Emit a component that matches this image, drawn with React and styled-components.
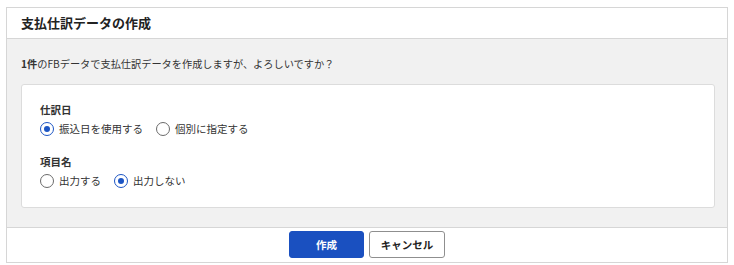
import React, { useState } from "react";
import styled, { createGlobalStyle } from "styled-components";

const GlobalStyle = createGlobalStyle`
  body {
    margin: 0;
    background: #fff;
    font-family: "Noto Sans CJK JP", "Noto Sans", sans-serif;
    color: #333;
  }
`;

const Page = styled.div`
  padding: 7px 6px 0 6px;
`;

const Dialog = styled.div`
  width: 722px;
  height: 256px;
  box-sizing: border-box;
  border: 1px solid #d6d6d6;
  display: flex;
  flex-direction: column;
  background: #fff;
`;

const Header = styled.div`
  height: 32px;
  box-sizing: border-box;
  border-bottom: 1px solid #d6d6d6;
  display: flex;
  align-items: center;
  padding: 0 14px;
`;

const Title = styled.h1`
  margin: 0;
  font-size: 13px;
  font-weight: 700;
  color: #222;
  line-height: 1;
`;

const Body = styled.div`
  flex: 1;
  background: #f1f1f1;
  border-bottom: 1px solid #d6d6d6;
  padding: 17px 12px 19px 14px;
  display: flex;
  flex-direction: column;
`;

const Message = styled.p`
  margin: 0 0 13px 0;
  font-size: 10.2px;
  line-height: 15px;
  color: #333;

  strong {
    font-weight: 700;
  }
`;

const Card = styled.div`
  background: #fff;
  border: 1px solid #dcdcdc;
  border-radius: 3px;
  padding: 18px 18px 19px 18px;
  display: flex;
  flex-direction: column;
  gap: 19px;
`;

const Field = styled.div`
  display: flex;
  flex-direction: column;
  gap: 5px;
`;

const Label = styled.div`
  font-size: 10.5px;
  line-height: 14px;
  font-weight: 700;
  color: #333;
`;

const Options = styled.div`
  display: flex;
  align-items: center;
  gap: 13px;
`;

const Option = styled.label`
  display: flex;
  align-items: center;
  gap: 5px;
  font-size: 10.5px;
  line-height: 14px;
  color: #333;
  cursor: pointer;
`;

const Circle = styled.span`
  width: 14px;
  height: 14px;
  box-sizing: border-box;
  border-radius: 50%;
  border: 1.5px solid ${(p) => (p.$checked ? "#1c55c4" : "#6b6b6b")};
  display: flex;
  align-items: center;
  justify-content: center;
  background: #fff;

  &::after {
    content: "";
    width: 6px;
    height: 6px;
    border-radius: 50%;
    background: #1c55c4;
    display: ${(p) => (p.$checked ? "block" : "none")};
  }
`;

const Footer = styled.div`
  height: 36px;
  display: flex;
  align-items: center;
  justify-content: center;
  gap: 5px;
`;

const Button = styled.button`
  height: 27px;
  width: ${(p) => p.$width}px;
  box-sizing: border-box;
  border-radius: 3px;
  font-family: inherit;
  font-size: 10.5px;
  font-weight: 700;
  cursor: pointer;
  padding: 0;
  background: ${(p) => (p.$primary ? "#1a50c0" : "#fff")};
  color: ${(p) => (p.$primary ? "#fff" : "#222")};
  border: 1px solid ${(p) => (p.$primary ? "#1a50c0" : "#8f8f8f")};
`;

const Radio = ({ checked, onClick, children }) => (
  <Option onClick={onClick}>
    <Circle $checked={checked} />
    {children}
  </Option>
);

const App = () => {
  const [dateMode, setDateMode] = useState("transfer");
  const [itemName, setItemName] = useState("no");

  return (
    <Page>
      <GlobalStyle />
      <Dialog>
        <Header>
          <Title>支払仕訳データの作成</Title>
        </Header>
        <Body>
          <Message>
            <strong>1件</strong>のFBデータで支払仕訳データを作成しますが、よろしいですか？
          </Message>
          <Card>
            <Field>
              <Label>仕訳日</Label>
              <Options>
                <Radio checked={dateMode === "transfer"} onClick={() => setDateMode("transfer")}>
                  振込日を使用する
                </Radio>
                <Radio checked={dateMode === "each"} onClick={() => setDateMode("each")}>
                  個別に指定する
                </Radio>
              </Options>
            </Field>
            <Field>
              <Label>項目名</Label>
              <Options>
                <Radio checked={itemName === "yes"} onClick={() => setItemName("yes")}>
                  出力する
                </Radio>
                <Radio checked={itemName === "no"} onClick={() => setItemName("no")}>
                  出力しない
                </Radio>
              </Options>
            </Field>
          </Card>
        </Body>
        <Footer>
          <Button $primary $width={75}>作成</Button>
          <Button $width={76}>キャンセル</Button>
        </Footer>
      </Dialog>
    </Page>
  );
};

export default App;
